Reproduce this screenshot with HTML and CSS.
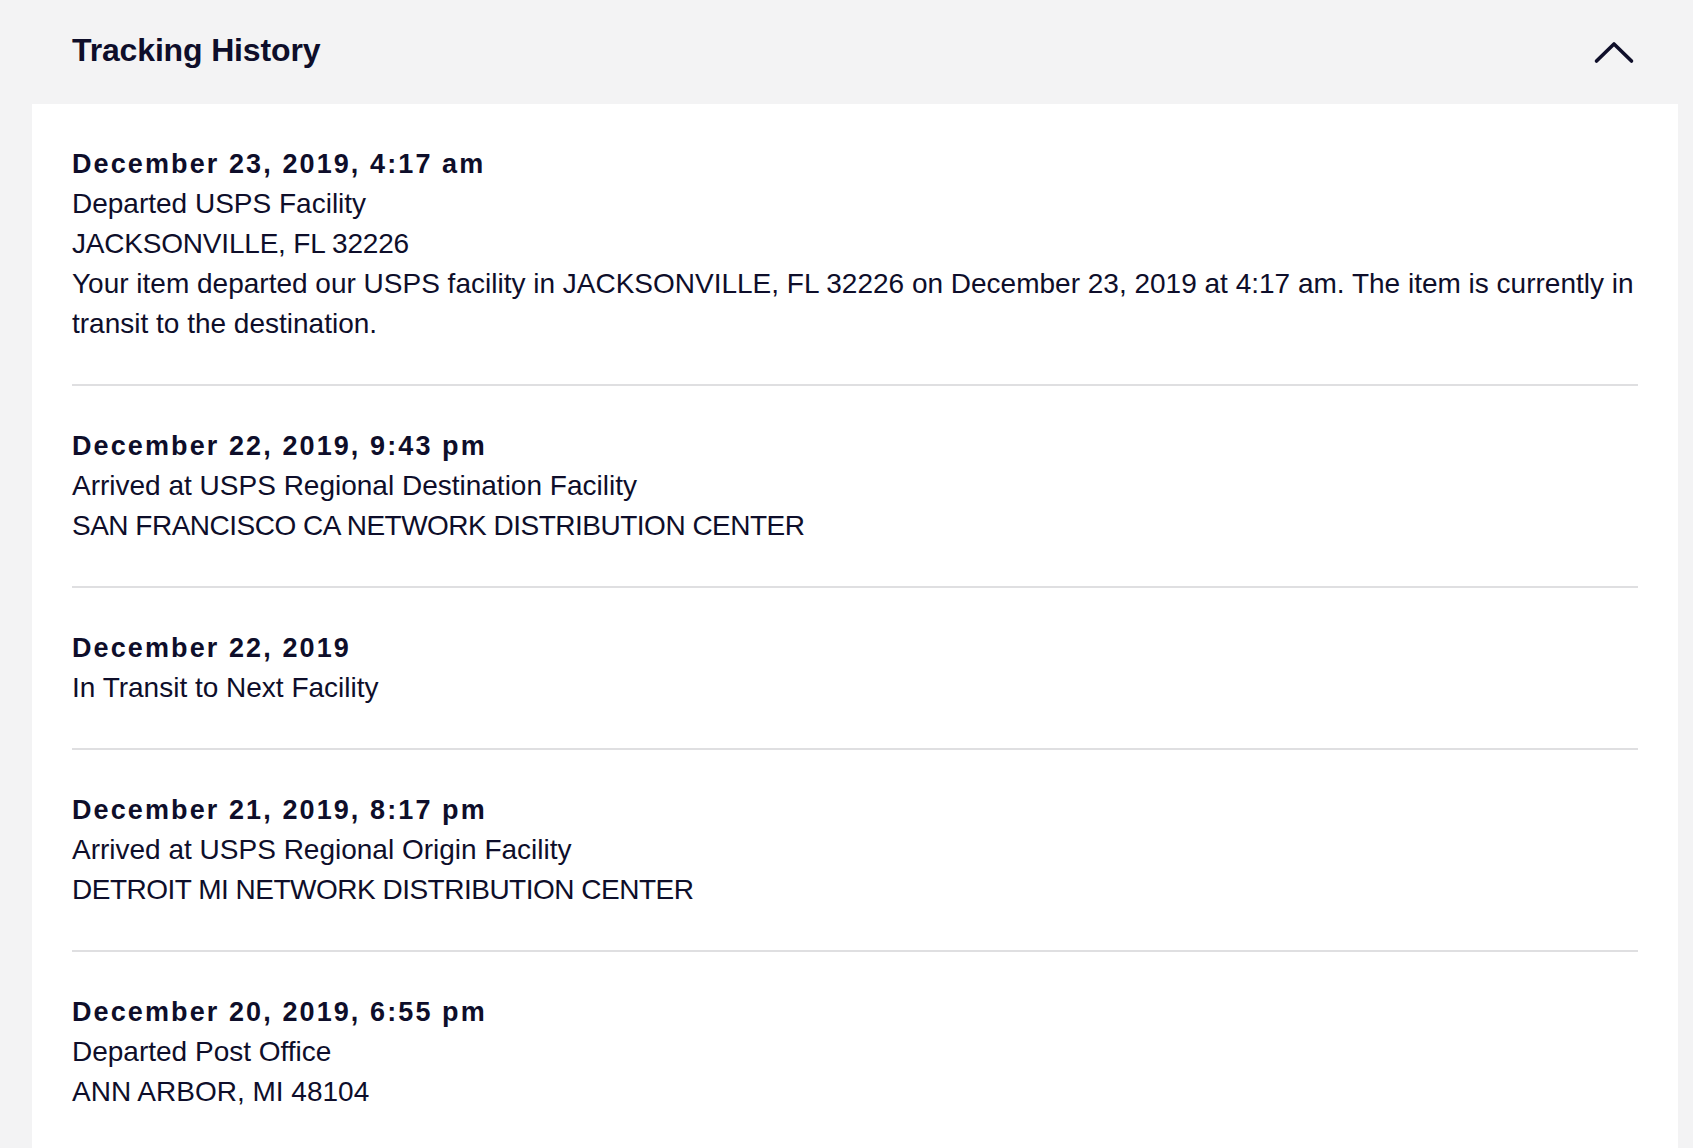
FILE: index.html
```html
<!DOCTYPE html>
<html lang="en">
<head>
<meta charset="utf-8">
<title>Tracking History</title>
<link rel="stylesheet" href="styles.css">
</head>
<body>
<div class="page">
  <div class="header">
    <h2 class="title">Tracking History</h2>
    <svg class="chevron" width="42" height="24" viewBox="0 0 42 24" aria-hidden="true">
      <path d="M3.5 21 L21 4 L38.5 21" fill="none" stroke="#0f0f2a" stroke-width="3.6" stroke-linecap="round" stroke-linejoin="round"/>
    </svg>
  </div>
  <div class="card">
    <div class="entry">
      <div class="date">December 23, 2019, 4:17 am</div>
      <div class="line">Departed USPS Facility</div>
      <div class="line caps-tight">JACKSONVILLE, FL 32226</div>
      <div class="line">Your item departed our USPS facility in JACKSONVILLE, FL 32226 on December 23, 2019 at 4:17 am. The item is currently in transit to the destination.</div>
    </div>
    <div class="entry">
      <div class="date">December 22, 2019, 9:43 pm</div>
      <div class="line">Arrived at USPS Regional Destination Facility</div>
      <div class="line caps">SAN FRANCISCO CA NETWORK DISTRIBUTION CENTER</div>
    </div>
    <div class="entry">
      <div class="date">December 22, 2019</div>
      <div class="line">In Transit to Next Facility</div>
    </div>
    <div class="entry">
      <div class="date">December 21, 2019, 8:17 pm</div>
      <div class="line">Arrived at USPS Regional Origin Facility</div>
      <div class="line caps">DETROIT MI NETWORK DISTRIBUTION CENTER</div>
    </div>
    <div class="entry">
      <div class="date">December 20, 2019, 6:55 pm</div>
      <div class="line">Departed Post Office</div>
      <div class="line">ANN ARBOR, MI 48104</div>
    </div>
  </div>
</div>
</body>
</html>
```

FILE: styles.css
```css
html, body {
  margin: 0;
  padding: 0;
  height: 100%;
  overflow: hidden;
}

body {
  background: #f3f3f4;
  font-family: "Liberation Sans", Arial, Helvetica, sans-serif;
  color: #0e0e2a;
}

.page {
  padding: 0 15px 0 32px;
}

.header {
  height: 104px;
  box-sizing: border-box;
  padding: 30px 40px 0 40px;
  display: flex;
  justify-content: space-between;
  align-items: flex-start;
}

.title {
  margin: 0;
  font-size: 32px;
  line-height: 40px;
  font-weight: 700;
  letter-spacing: -0.15px;
}

.chevron {
  display: block;
  margin-top: 10px;
  margin-right: 3px;
}

.card {
  background: #ffffff;
  padding: 0 40px;
  min-height: 1100px;
}

.entry {
  padding: 40px 0;
  border-bottom: 2px solid #dfdfe1;
}

.date {
  font-size: 27px;
  line-height: 40px;
  font-weight: 700;
  letter-spacing: 2.1px;
}

.line {
  font-size: 28px;
  line-height: 40px;
}

.caps {
  letter-spacing: -0.5px;
}

.caps-tight {
  letter-spacing: -0.2px;
}
```
